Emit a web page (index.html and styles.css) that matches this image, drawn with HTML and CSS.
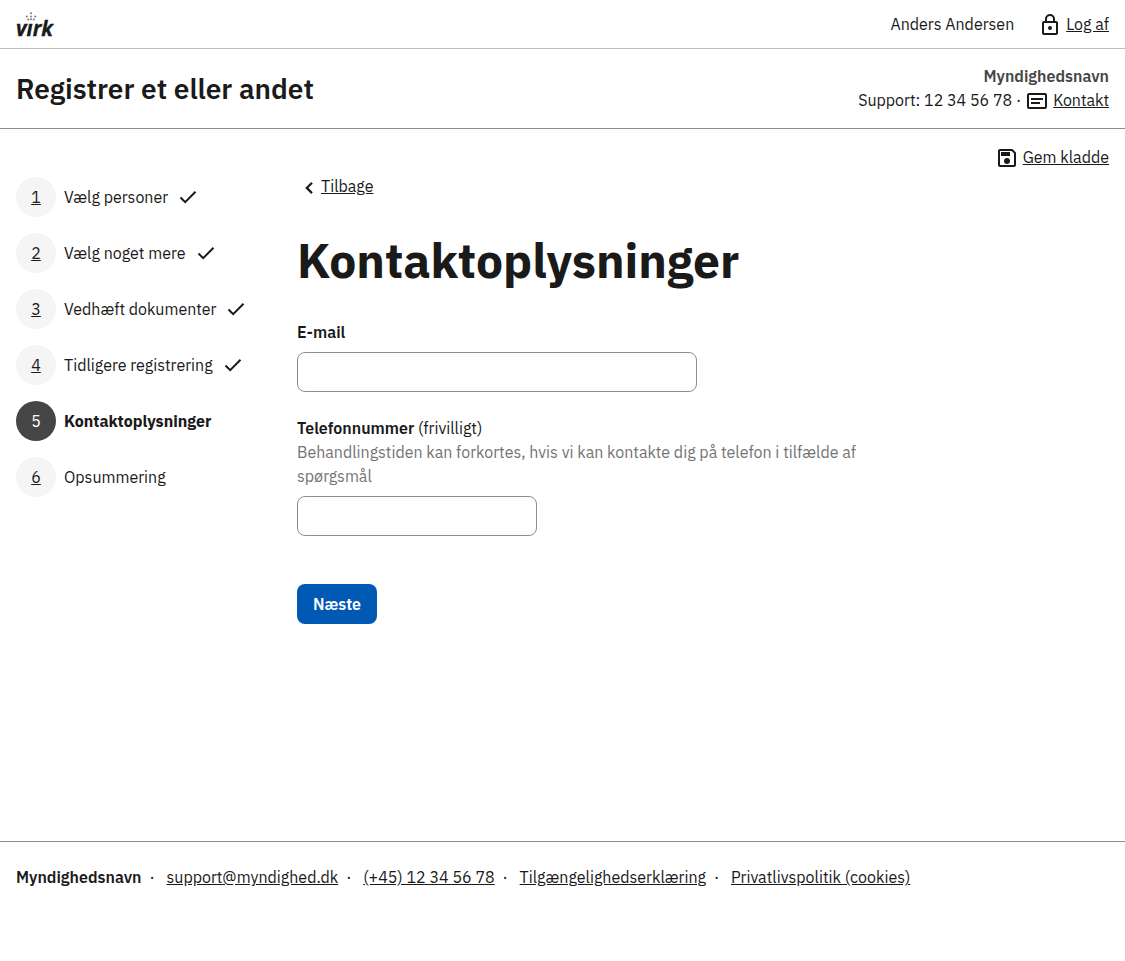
FILE: index.html
```html
<!DOCTYPE html>
<html lang="da">
<head>
<meta charset="utf-8">
<title>Kontaktoplysninger</title>
<link rel="stylesheet" href="styles.css">
</head>
<body>
<div class="page">
  <header>
    <div class="topbar">
      <a class="logo" href="#" aria-label="virk">
        <svg width="44" height="32" viewBox="0 0 44 32">
          <text class="logo-text" x="0" y="28" textLength="37" lengthAdjust="spacingAndGlyphs">vırk</text>
          <g fill="#777">
            <circle cx="15" cy="5.3" r="1"/><circle cx="15" cy="8.5" r=".9"/><circle cx="15" cy="11.3" r="1"/>
            <circle cx="10.8" cy="8.6" r="1"/><circle cx="19.2" cy="8.6" r="1"/>
            <circle cx="12.2" cy="11.5" r="1"/><circle cx="17.8" cy="11.5" r="1"/>
          </g>
        </svg>
      </a>
      <div class="user">
        <span class="user-name">Anders Andersen</span>
        <a class="icon-link logout" href="#"><svg class="icon" viewBox="0 0 24 24"><path fill="none" stroke="currentColor" stroke-width="2" d="M6 9h12a1 1 0 0 1 1 1v10a1 1 0 0 1-1 1H6a1 1 0 0 1-1-1V10a1 1 0 0 1 1-1ZM8 9V6a4 4 0 0 1 8 0v3"/><circle cx="12" cy="15" r="2" fill="currentColor"/></svg><span class="link">Log af</span></a>
      </div>
    </div>
    <div class="solution">
      <div class="solution-title">Registrer et eller andet</div>
      <div class="authority">
        <div class="authority-name">Myndighedsnavn</div>
        <div class="support"><span class="support-phone">Support: 12 34 56 78 ·</span><a class="icon-link contact" href="#"><svg class="icon" viewBox="0 0 24 24"><rect x="3" y="5" width="18" height="14" rx="1" fill="none" stroke="currentColor" stroke-width="2"/><path fill="none" stroke="currentColor" stroke-width="2" d="M6 10h12M6 14h9"/></svg><span class="link">Kontakt</span></a></div>
      </div>
    </div>
  </header>
  <div class="draft">
    <a class="icon-link save" href="#"><svg class="icon" viewBox="0 0 24 24"><path fill="none" stroke="currentColor" stroke-width="2" stroke-linejoin="round" d="M5 4h12l3 3v12a1 1 0 0 1-1 1H5a1 1 0 0 1-1-1V5a1 1 0 0 1 1-1Z"/><path fill="currentColor" d="M6 6h9v4H6z"/><circle cx="12" cy="15" r="3" fill="currentColor"/></svg><span class="link">Gem kladde</span></a>
  </div>
  <div class="content">
    <nav>
      <ol class="steps">
        <li class="step"><a class="number" href="#">1</a><span class="step-name">Vælg personer</span><svg class="icon" viewBox="0 0 24 24"><path class="check" d="m4.5 12.5 4.7 4.7L19.5 6.7"/></svg></li>
        <li class="step"><a class="number" href="#">2</a><span class="step-name">Vælg noget mere</span><svg class="icon" viewBox="0 0 24 24"><path class="check" d="m4.5 12.5 4.7 4.7L19.5 6.7"/></svg></li>
        <li class="step"><a class="number" href="#">3</a><span class="step-name">Vedhæft dokumenter</span><svg class="icon" viewBox="0 0 24 24"><path class="check" d="m4.5 12.5 4.7 4.7L19.5 6.7"/></svg></li>
        <li class="step"><a class="number" href="#">4</a><span class="step-name">Tidligere registrering</span><svg class="icon" viewBox="0 0 24 24"><path class="check" d="m4.5 12.5 4.7 4.7L19.5 6.7"/></svg></li>
        <li class="step current"><a class="number" href="#">5</a><span class="step-name">Kontaktoplysninger</span></li>
        <li class="step"><a class="number" href="#">6</a><span class="step-name">Opsummering</span></li>
      </ol>
    </nav>
    <main>
      <a class="back" href="#"><svg class="icon" viewBox="0 0 24 24"><path fill="none" stroke="currentColor" stroke-width="2.2" d="M15 7.7 9.8 12.9l5.2 5.2"/></svg><span class="link">Tilbage</span></a>
      <h1>Kontaktoplysninger</h1>
      <form>
        <label class="label email-label" for="email">E-mail</label>
        <input class="input" id="email" type="email">
        <label class="label phone-label" for="phone"><span class="label-name">Telefonnummer</span> <span class="optional">(frivilligt)</span></label>
        <p class="hint">Behandlingstiden kan forkortes, hvis vi kan kontakte dig på telefon i tilfælde af spørgsmål</p>
        <input class="input input-phone" id="phone" type="tel">
        <button class="button" type="button">Næste</button>
      </form>
    </main>
  </div>
  <footer>
    <strong>Myndighedsnavn</strong><span class="dot">·</span><a class="link" href="#">support@myndighed.dk</a><span class="dot">·</span><a class="link" href="#">(+45) 12 34 56 78</a><span class="dot">·</span><a class="link" href="#">Tilgængelighedserklæring</a><span class="dot">·</span><a class="link" href="#">Privatlivspolitik (cookies)</a>
  </footer>
</div>
</body>
</html>
```
FILE: styles.css
```css
* { box-sizing: border-box; }
body {
  margin: 0;
  background: #fff;
  color: #1a1a1a;
  font: 400 16px/24px "IBM Plex Sans", "Open Sans", sans-serif;
}
a { color: inherit; text-decoration: none; }
.page { display: flex; flex-direction: column; min-height: 961px; }
.icon { width: 24px; height: 24px; flex: none; display: block; }
.link { text-decoration: underline; }
.icon-link { display: inline-flex; align-items: center; gap: 4px; height: 24px; }
.icon-link .icon { margin-top: 2px; }

.topbar {
  display: flex; justify-content: space-between; align-items: center;
  height: 49px; padding: 0 16px; border-bottom: 1px solid #bfbfbf;
}
.logo { display: block; }
.logo svg { display: block; overflow: visible; }
.logo-text { font: italic 700 21px "Open Sans", sans-serif; fill: #1a1a1a; stroke: #1a1a1a; stroke-width: .3px; }
.user { display: flex; align-items: center; gap: 24px; }

.solution {
  display: flex; justify-content: space-between; align-items: center;
  height: 80px; padding: 0 16px; border-bottom: 1px solid #8e8e8e;
}
.solution-title { font-size: 28px; line-height: 36px; font-weight: 600; }
.authority { text-align: right; padding-bottom: 1px; }
.authority-name { font-weight: 600; color: #454545; }
.support { display: flex; align-items: center; gap: 4px; }

.draft { display: flex; justify-content: flex-end; padding: 16px 16px 0; height: 48px; }

.content { display: grid; grid-template-columns: 281px 1fr; padding: 0 16px; height: 664px; }
.steps { margin: 0; padding: 0; list-style: none; display: flex; flex-direction: column; gap: 16px; }
.step { display: flex; align-items: center; gap: 8px; height: 40px; }
.number {
  width: 40px; height: 40px; border-radius: 50%; background: #f5f5f5;
  display: flex; align-items: center; justify-content: center;
  text-decoration: underline;
}
.current { font-weight: 700; }
.current .number { background: #454545; color: #fff; text-decoration: none; font-weight: 400; }
.check { fill: none; stroke: #1a1a1a; stroke-width: 2; }

.back { display: flex; width: max-content; align-items: center; height: 18px; }
.back .icon { margin-top: 2px; }
h1 { margin: 37px 0 0; font-size: 48px; line-height: 56px; font-weight: 700; }
form { display: flex; flex-direction: column; align-items: flex-start; }
.label { font-weight: 600; }
.email-label { margin-top: 32px; }
.phone-label { margin-top: 24px; }
.optional { font-weight: 400; }
.hint { margin: 0; max-width: 592px; color: #747474; }
.input {
  width: 400px; height: 40px; margin-top: 8px; padding: 0 8px;
  border: 1px solid #8e8e8e; border-radius: 8px; background: #fff; font: inherit;
}
.input-phone { width: 240px; }
.button {
  width: 80px; height: 40px; margin-top: 48px; padding: 0; border: 0; border-radius: 8px;
  background: #0059b3; color: #fff; font: inherit; font-weight: 600;
}

footer { display: flex; padding: 23px 16px 0; border-top: 1px solid #8e8e8e; height: 120px; }
footer strong { font-weight: 600; }
.dot { width: 25px; padding-left: 8px; }
```
